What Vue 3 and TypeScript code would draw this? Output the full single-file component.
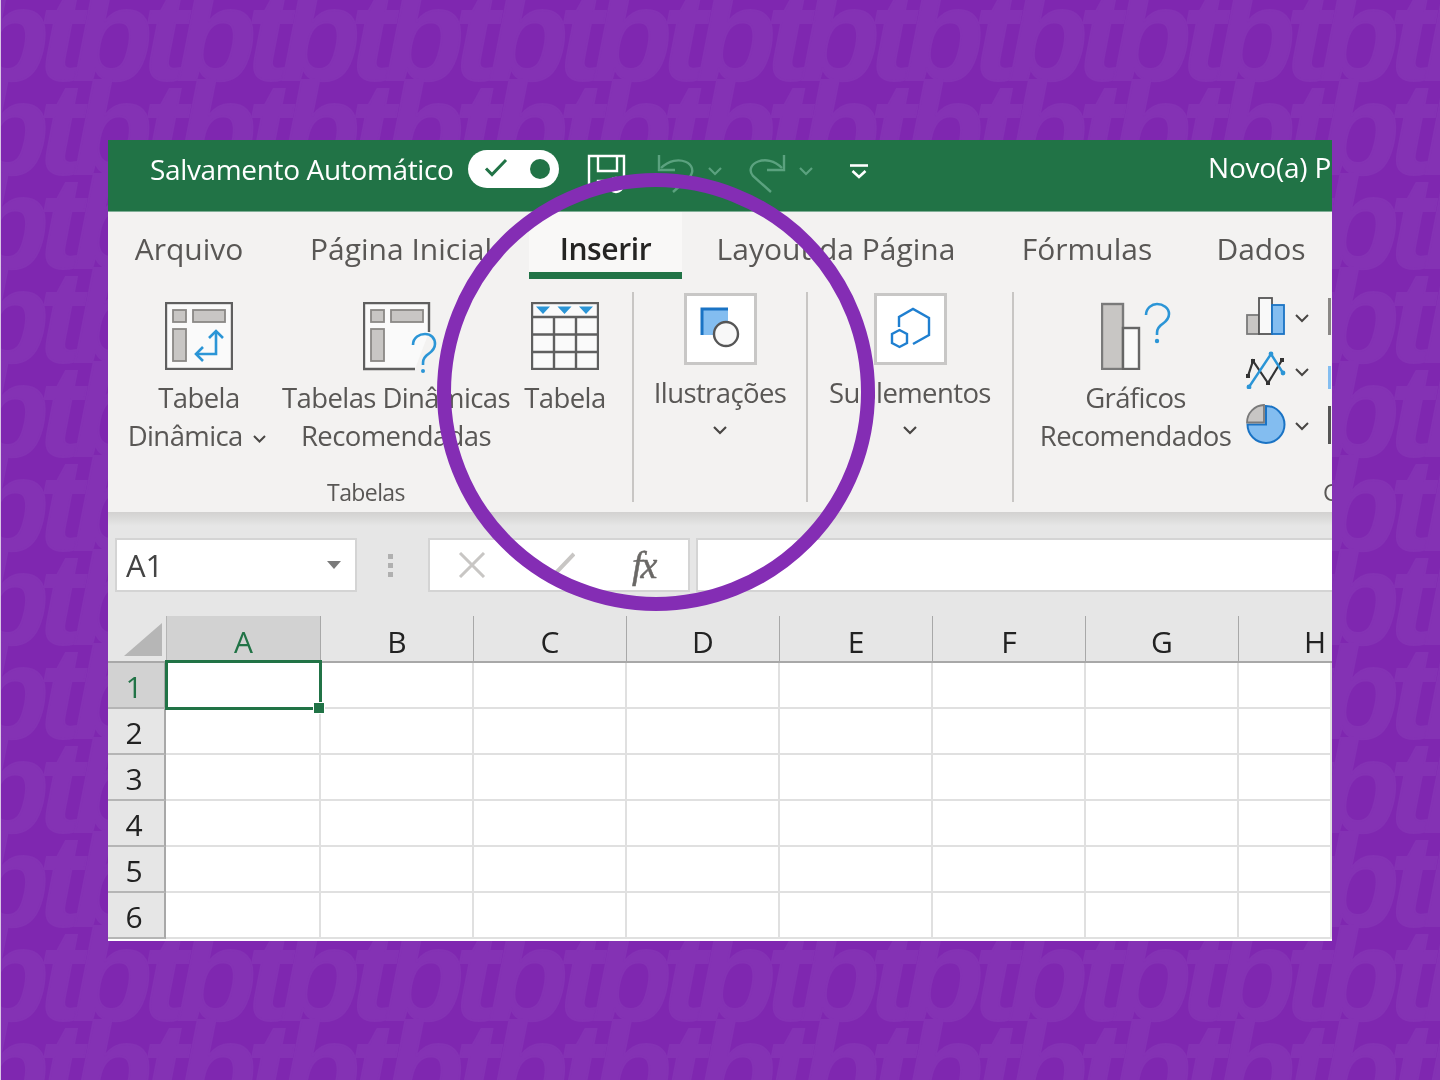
<script setup lang="ts">
const tabs = [
  { label: 'Arquivo', width: 162 },
  { label: 'Página Inicial', width: 256 },
  { label: 'Inserir', width: 153, active: true },
  { label: 'Layout da Página', width: 308 },
  { label: 'Fórmulas', width: 194 },
  { label: 'Dados', width: 154 },
]

const columns = ['A', 'B', 'C', 'D', 'E', 'F', 'G', 'H']
const rows = [1, 2, 3, 4, 5, 6]

const watermarkRows = Array.from({ length: 12 }, (_, i) => i)
const watermarkText = 'tb'.repeat(16)
</script>

<template>
  <div class="page">
    <div class="watermark" aria-hidden="true">
      <div v-for="r in watermarkRows" :key="r" class="watermark-row">{{ watermarkText }}</div>
    </div>

    <main class="window">
      <header class="titlebar">
        <span class="autosave">Salvamento Automático</span>
        <span class="toggle">
          <svg class="toggle-check" width="24" height="20" viewBox="0 0 24 20">
            <path d="M2 10.5 L8 16.5 L22 2" fill="none" stroke="#217346" stroke-width="3" />
          </svg>
          <span class="toggle-knob"></span>
        </span>
        <svg class="qat-save" width="40" height="40" viewBox="0 0 40 40" fill="none" stroke="#fff" stroke-width="2.4">
          <path d="M2 38 V2 H37 V24" />
          <path d="M11 2 V17 H30 V2" />
          <path d="M11 38 V27 H20" />
          <circle cx="29" cy="31" r="7" />
        </svg>
        <svg class="qat-undo" width="38" height="40" viewBox="0 0 38 40" fill="none" stroke="#5ba27f" stroke-width="2.4">
          <path d="M2 1 V16 H18" />
          <path d="M4 14 C20 -2 44 10 32 24 L16 38" />
        </svg>
        <svg class="qat-chev" width="14" height="9" viewBox="0 0 14 9" fill="none" stroke="#5ba27f" stroke-width="2.2">
          <path d="M1 1 L7 7 L13 1" />
        </svg>
        <svg class="qat-redo" width="38" height="40" viewBox="0 0 38 40" fill="none" stroke="#5ba27f" stroke-width="2.4">
          <path d="M35 1 V16 H18" />
          <path d="M33 14 C18 -2 -6 10 4 22 L22 38" />
        </svg>
        <svg class="qat-chev qat-chev-last" width="14" height="9" viewBox="0 0 14 9" fill="none" stroke="#5ba27f" stroke-width="2.2">
          <path d="M1 1 L7 7 L13 1" />
        </svg>
        <svg class="qat-more" width="18" height="15" viewBox="0 0 18 15" fill="none" stroke="#fff" stroke-width="2.6">
          <path d="M0 1.5 H18" />
          <path d="M2.5 7 L9 13 L15.5 7" />
        </svg>
        <span class="doc-title">Novo(a) Pasta de trabalho</span>
      </header>

      <nav class="tabs">
        <div
          v-for="tab in tabs"
          :key="tab.label"
          class="tab"
          :class="{ active: tab.active }"
          :style="{ width: tab.width + 'px' }"
        >
          {{ tab.label }}
        </div>
      </nav>

      <section class="ribbon">
        <div class="group group-tables">
          <div class="group-items">
            <div class="cmd cmd-pivot">
              <svg class="cmd-icon" width="68" height="68" viewBox="0 0 68 68">
                <rect x="1" y="1" width="66" height="66" fill="#fafafa" stroke="#5f5f5f" stroke-width="2.4" />
                <g fill="#c8c6c4" stroke="#8a8886" stroke-width="1.8">
                  <rect x="8" y="8" width="13" height="12" />
                  <rect x="28" y="8" width="32" height="12" />
                  <rect x="8" y="27" width="13" height="32" />
                </g>
                <g fill="none" stroke="#2b95d6" stroke-width="2.6">
                  <path d="M31 52 H51 V29" />
                  <path d="M44 36 L51 29 L58 36" />
                  <path d="M38 45 L31 52 L38 59" />
                </g>
              </svg>
              <span class="cmd-label">Tabela</span>
              <span class="cmd-label">
                Dinâmica
                <svg class="chev-inline" width="13" height="8" viewBox="0 0 13 8" fill="none" stroke="#484644" stroke-width="2">
                  <path d="M1 1 L6.5 6.5 L12 1" />
                </svg>
              </span>
            </div>
            <div class="cmd cmd-recommended">
              <svg class="cmd-icon" width="76" height="74" viewBox="0 0 76 74">
                <path d="M52 67 H1 V1 H66 V30" fill="#fafafa" stroke="#5f5f5f" stroke-width="2.4" />
                <g fill="#c8c6c4" stroke="#8a8886" stroke-width="1.8">
                  <rect x="8" y="8" width="13" height="12" />
                  <rect x="28" y="8" width="32" height="12" />
                  <rect x="8" y="27" width="13" height="32" />
                </g>
                <path d="M50 43 C50 35 57 32 62 32 C68 32 72 36 72 42 C72 49 66 51 63 54 C60 57 60 59 60 63" fill="none" stroke="#2b95d6" stroke-width="2.6" />
                <circle cx="60" cy="69" r="2" fill="#2b95d6" />
              </svg>
              <span class="cmd-label">Tabelas Dinâmicas</span>
              <span class="cmd-label">Recomendadas</span>
            </div>
            <div class="cmd cmd-table">
              <svg class="cmd-icon" width="68" height="68" viewBox="0 0 68 68">
                <rect x="1" y="1" width="66" height="66" fill="#fafafa" stroke="#5f5f5f" stroke-width="2.4" />
                <path d="M1 15 H67 M1 32.5 H67 M1 50 H67 M23 15 V67 M45 15 V67" stroke="#5f5f5f" stroke-width="2.4" fill="none" />
                <path d="M5 4.5 H19 L12 12 Z M26.500 4.500 H40.500 L33.500 12 Z M48 4.500 H62 L55 12 Z" fill="#2b95d6" />
              </svg>
              <span class="cmd-label">Tabela</span>
            </div>
          </div>
          <div class="group-name group-name-tables">Tabelas</div>
        </div>

        <div class="group group-illustrations">
          <div class="boxed-cmd">
            <div class="icon-box">
              <svg width="66" height="66" viewBox="0 0 66 66">
                <rect x="15" y="13" width="26" height="26" fill="#83bdf0" />
                <path d="M15 39 V13 H41" fill="none" stroke="#1a73c4" stroke-width="3" />
                <circle cx="39" cy="38" r="12" fill="#f8f8f8" stroke="#555" stroke-width="2.400" />
              </svg>
            </div>
            <span class="cmd-label">Ilustrações</span>
            <svg class="chev-below" width="14" height="9" viewBox="0 0 14 9" fill="none" stroke="#484644" stroke-width="2.2">
              <path d="M1 1 L7 7 L13 1" />
            </svg>
          </div>
        </div>

        <div class="group group-addins">
          <div class="boxed-cmd">
            <div class="icon-box">
              <svg width="66" height="66" viewBox="0 0 66 66" fill="none" stroke="#1f7fd0" stroke-width="2.400">
                <path d="M36 48 L52 39 V22 L36 13 L22 21 V31" />
                <path d="M22.500 34 L30 38 V47 L22.500 51 L15 47 V38 Z" />
              </svg>
            </div>
            <span class="cmd-label">Suplementos</span>
            <svg class="chev-below" width="14" height="9" viewBox="0 0 14 9" fill="none" stroke="#484644" stroke-width="2.2">
              <path d="M1 1 L7 7 L13 1" />
            </svg>
          </div>
        </div>

        <div class="group group-charts">
          <div class="group-items charts-row">
            <div class="cmd cmd-charts">
              <svg class="cmd-icon" width="70" height="68" viewBox="0 0 70 68">
                <rect x="1" y="2" width="21" height="65" fill="#c8c6c4" stroke="#7a7a7a" stroke-width="2.400" />
                <rect x="22" y="26" width="16" height="41" fill="#f9f9f9" stroke="#666" stroke-width="2.400" />
                <path d="M45 13 C45 6 51 2 56 2 C62 2 68 6 68 12 C68 19 62 21 59 24 C56 27 56 29 56 33" fill="none" stroke="#2b95d6" stroke-width="2.600" />
                <circle cx="56" cy="39" r="2.200" fill="#2b95d6" />
              </svg>
              <span class="cmd-label">Gráficos</span>
              <span class="cmd-label">Recomendados</span>
            </div>
            <div class="small-cmds">
              <div class="small-cmd">
                <svg width="40" height="38" viewBox="0 0 40 38">
                  <rect x="1" y="18" width="12" height="19" fill="#c8c6c4" stroke="#7a7a7a" stroke-width="1.800" />
                  <rect x="13" y="1" width="13" height="36" fill="#f9f9f9" stroke="#555" stroke-width="1.800" />
                  <rect x="26" y="8" width="12" height="29" fill="#83bdf0" stroke="#1a73c4" stroke-width="1.800" />
                </svg>
                <svg class="small-chev" width="14" height="9" viewBox="0 0 14 9" fill="none" stroke="#484644" stroke-width="2">
                  <path d="M1 1 L7 7 L13 1" />
                </svg>
              </div>
              <div class="small-cmd">
                <svg width="40" height="38" viewBox="0 0 40 38" fill="none">
                  <path d="M2 25 L7 10 L22 32 L36 9" stroke="#333" stroke-width="2.200" />
                  <path d="M3 36 L25 3 L37 22" stroke="#2b95d6" stroke-width="2.400" />
                  <circle cx="3" cy="36" r="2.400" fill="#2b95d6" />
                  <circle cx="25" cy="3" r="2.400" fill="#2b95d6" />
                  <circle cx="37" cy="22" r="2.400" fill="#2b95d6" />
                  <rect x="0" y="23" width="4" height="4" fill="#333" />
                  <rect x="5" y="8" width="4" height="4" fill="#333" />
                  <rect x="20" y="30" width="4" height="4" fill="#333" />
                  <rect x="34" y="7" width="4" height="4" fill="#333" />
                </svg>
                <svg class="small-chev" width="14" height="9" viewBox="0 0 14 9" fill="none" stroke="#484644" stroke-width="2">
                  <path d="M1 1 L7 7 L13 1" />
                </svg>
              </div>
              <div class="small-cmd">
                <svg width="40" height="40" viewBox="0 0 40 40">
                  <path d="M20 2 A18.500 18.500 0 1 1 1.500 20.500 H20 Z" fill="#83bdf0" stroke="#1a73c4" stroke-width="2" />
                  <path d="M18 1 V18.500 H1 A17.500 17.500 0 0 1 18 1 Z" fill="#c8c6c4" stroke="#7a7a7a" stroke-width="1.800" />
                </svg>
                <svg class="small-chev" width="14" height="9" viewBox="0 0 14 9" fill="none" stroke="#484644" stroke-width="2">
                  <path d="M1 1 L7 7 L13 1" />
                </svg>
              </div>
            </div>
            <div class="next-col">
              <span class="next-bar"></span>
              <span class="next-bar blue"></span>
              <span class="next-bar dark"></span>
            </div>
          </div>
          <div class="group-name charts-name">Gráficos</div>
        </div>
      </section>

      <section class="formula-bar">
        <div class="name-box">
          <span>A1</span>
          <span class="name-arrow"></span>
        </div>
        <div class="grip"><i></i><i></i><i></i></div>
        <div class="fx-box">
          <svg width="28" height="26" viewBox="0 0 28 26" fill="none" stroke="#c8c6c4" stroke-width="3">
            <path d="M2 1 L26 25 M26 1 L2 25" />
          </svg>
          <svg width="34" height="26" viewBox="0 0 34 26" fill="none" stroke="#c8c6c4" stroke-width="4">
            <path d="M2 14 L12 24 L33 2" />
          </svg>
          <span class="fx">fx</span>
        </div>
        <div class="formula-input"></div>
      </section>

      <section class="sheet">
        <div class="corner"><span class="corner-tri"></span></div>
        <div
          v-for="col in columns"
          :key="col"
          class="col-head"
          :class="{ selected: col === 'A' }"
        >
          {{ col }}
        </div>
        <template v-for="row in rows" :key="row">
          <div class="row-head" :class="{ selected: row === 1 }">{{ row }}</div>
          <div
            v-for="col in columns"
            :key="col + row"
            class="cell"
            :class="{ 'cell-active': row === 1 && col === 'A' }"
          >
            <template v-if="row === 1 && col === 'A'">
              <span class="selection"></span>
              <span class="handle"></span>
            </template>
          </div>
        </template>
      </section>
    </main>

    <svg class="highlight" width="438" height="438" viewBox="0 0 438 438">
      <circle cx="219" cy="219" r="212" fill="none" stroke="#842db4" stroke-width="14" />
    </svg>
  </div>
</template>

<style>
html,
body {
  margin: 0;
  background: #7f27b0;
}
</style>

<style scoped>
.page {
  position: relative;
  width: 1440px;
  height: 1080px;
  box-sizing: border-box;
  padding: 140px 108px 139px;
  background: #7f27b0;
  border-left: 1px solid #d9c6e6;
  overflow: hidden;
  font-family: "Open Sans", "Noto Sans", sans-serif;
}

.watermark {
  position: absolute;
  left: -66px;
  top: -12px;
  font-family: "Liberation Sans", sans-serif;
  font-weight: 700;
  font-style: italic;
  font-size: 130px;
  letter-spacing: -9.4px;
  line-height: 94px;
  color: #8432b4;
  -webkit-text-stroke: 2px #8432b4;
  white-space: nowrap;
}

.watermark-row {
  height: 94px;
}

.window {
  position: relative;
  width: 1224px;
  height: 801px;
  margin-left: -1px;
  overflow: hidden;
  background: #fff;
  filter: blur(0.45px);
}

/* title bar */
.titlebar {
  box-sizing: border-box;
  display: flex;
  align-items: center;
  height: 72px;
  padding: 0 0 10px 42px;
  background: #217346;
  border-bottom: 1px solid #7fae96;
  color: #fff;
  white-space: nowrap;
}

.autosave {
  width: 318px;
  font-size: 28px;
  letter-spacing: -0.35px;
  flex: none;
  margin-bottom: 3px;
}

.toggle {
  position: relative;
  display: block;
  flex: none;
  width: 91px;
  height: 38px;
  border-radius: 19px;
  background: #fff;
  margin-bottom: 3px;
}

.toggle-check {
  position: absolute;
  left: 16px;
  top: 8px;
}

.toggle-knob {
  position: absolute;
  left: 62px;
  top: 9px;
  width: 20px;
  height: 20px;
  border-radius: 50%;
  background: #217346;
}

.titlebar svg {
  flex: none;
}

.qat-save {
  margin-left: 28px;
  margin-top: 7px;
}

.qat-undo {
  margin-left: 30px;
  margin-top: 7px;
}

.titlebar .qat-chev {
  margin-left: 13px;
  margin-top: 1px;
}

.qat-redo {
  margin-left: 27px;
  margin-top: 7px;
}

.titlebar .qat-chev-last {
  margin-left: 12px;
}

.qat-more {
  margin-left: 37px;
  margin-top: 2px;
}

.doc-title {
  margin-left: 340px;
  font-size: 28px;
  letter-spacing: -0.2px;
  margin-bottom: 7px;
}

/* tabs */
.tabs {
  display: flex;
  height: 67px;
  background: #f3f2f1;
  white-space: nowrap;
}

.tab {
  box-sizing: border-box;
  flex: none;
  height: 67px;
  line-height: 73px;
  text-align: center;
  font-size: 30px;
  color: #595755;
}

.tab:first-child {
  margin-right: 3px;
}

.tab.active {
  height: 67px;
  background: #f9f8f7;
  border-bottom: 7px solid #217346;
  color: #252423;
  font-weight: 600;
  letter-spacing: -0.4px;
}

/* ribbon */
.ribbon {
  display: flex;
  height: 233px;
  background: #f3f2f1;
  color: #595755;
}

.group {
  position: relative;
  flex: none;
  box-sizing: border-box;
  display: flex;
  flex-direction: column;
}

.group::after {
  content: "";
  position: absolute;
  right: 0;
  top: 13px;
  height: 210px;
  width: 2px;
  background: #c8c6c4;
}

.group-tables {
  width: 526px;
}

.group-illustrations {
  width: 174px;
  padding-right: 2px;
}

.group-addins {
  width: 206px;
  padding-right: 2px;
}

.group-charts {
  width: 318px;
}

.group-charts::after {
  display: none;
}

.group-items {
  display: flex;
  padding-top: 23px;
  padding-left: 12px;
}

.group-name {
  position: absolute;
  left: 0;
  right: 0;
  top: 200px;
  text-align: center;
  font-size: 23px;
  line-height: 26px;
  letter-spacing: -0.6px;
  color: #595755;
}

.group-name-tables {
  padding-right: 10px;
}

.cmd {
  flex: none;
  display: flex;
  flex-direction: column;
  align-items: center;
  white-space: nowrap;
}

.cmd-pivot {
  width: 158px;
}

.cmd-recommended {
  width: 236px;
}

.cmd-table {
  width: 102px;
}

.cmd-icon {
  display: block;
  margin-bottom: 9px;
}

.cmd-recommended .cmd-icon {
  margin-left: 10px;
  margin-bottom: 3px;
}

.cmd-label {
  display: block;
  font-size: 27.5px;
  line-height: 38px;
  letter-spacing: -0.6px;
  white-space: nowrap;
}

.chev-inline {
  margin-left: 4px;
  margin-right: 4px;
  vertical-align: 3px;
}

.boxed-cmd {
  display: flex;
  flex-direction: column;
  align-items: center;
  padding-top: 14px;
}

.icon-box {
  box-sizing: border-box;
  width: 73px;
  height: 72px;
  border: 3px solid #c8c7c6;
  background: #fff;
  margin-bottom: 9px;
}

.icon-box svg {
  display: block;
}

.chev-below {
  margin-top: 14px;
}

.charts-row {
  padding-left: 0;
  padding-top: 18px;
}

.cmd-charts {
  width: 233px;
  padding-top: 5px;
  padding-left: 10px;
  box-sizing: border-box;
}

.small-cmds {
  display: flex;
  flex-direction: column;
  gap: 16px;
  flex: none;
  margin-left: -1px;
  width: 82px;
}

.small-cmd {
  display: flex;
  align-items: center;
  gap: 9px;
  height: 38px;
}

.small-chev {
  margin-top: 4px;
}

.next-col {
  display: flex;
  flex-direction: column;
  flex: none;
  padding-top: 1px;
}

.next-bar {
  display: block;
  width: 3px;
  height: 37px;
  background: #8a8886;
}

.next-bar.blue {
  height: 23px;
  margin-top: 31px;
  background: #83bdf0;
}

.next-bar.dark {
  height: 38px;
  margin-top: 17px;
  background: #555;
}

.charts-name {
  left: auto;
  right: -11px;
  width: 20px;
  text-align: left;
}

/* formula bar */
.formula-bar {
  display: flex;
  align-items: center;
  height: 104px;
  box-sizing: border-box;
  padding: 26px 0 24px 7px;
  background: linear-gradient(#d2d1d0 0, #e6e6e6 14px);
}

.name-box {
  box-sizing: border-box;
  flex: none;
  display: flex;
  align-items: center;
  justify-content: space-between;
  width: 242px;
  height: 54px;
  padding: 0 14px 0 9px;
  background: #fff;
  border: 2px solid #d4d4d4;
  font-size: 31px;
  color: #444;
}

.name-arrow {
  width: 0;
  height: 0;
  border-left: 7px solid transparent;
  border-right: 7px solid transparent;
  border-top: 8px solid #7a7a7a;
}

.grip {
  flex: none;
  display: flex;
  flex-direction: column;
  gap: 4px;
  margin-left: 31px;
  width: 40px;
}

.grip i {
  display: block;
  width: 5px;
  height: 5px;
  background: #b0b0b0;
}

.fx-box {
  box-sizing: border-box;
  flex: none;
  display: flex;
  align-items: center;
  width: 262px;
  height: 54px;
  padding-left: 28px;
  background: #fff;
  border: 2px solid #d4d4d4;
  gap: 55px;
}

.fx {
  font-family: "Liberation Serif", serif;
  font-style: italic;
  font-size: 38px;
  color: #6a6866;
  margin-left: 2px;
  letter-spacing: -2px;
  -webkit-text-stroke: 0.5px #6a6866;
}

.formula-input {
  flex: 1;
  height: 54px;
  box-sizing: border-box;
  margin-left: 6px;
  background: #fff;
  border: 2px solid #d4d4d4;
  border-right: none;
}

/* sheet */
.sheet {
  display: grid;
  grid-template-columns: 58px 155px repeat(6, 153px) 93px;
  grid-template-rows: 47px repeat(6, 46px);
  background: #fff;
}

.corner {
  position: relative;
  background: #e6e6e6;
  border-bottom: 2px solid #a8a8a8;
  box-sizing: border-box;
}

.corner-tri {
  position: absolute;
  left: 16px;
  top: 7px;
  width: 0;
  height: 0;
  border-left: 38px solid transparent;
  border-bottom: 33px solid #b6b6b6;
}

.col-head {
  box-sizing: border-box;
  background: #e6e6e6;
  border-bottom: 2px solid #a8a8a8;
  border-right: 1px solid #a8a8a8;
  text-align: center;
  font-size: 30px;
  line-height: 52px;
  color: #222;
  overflow: hidden;
}

.col-head:nth-child(2) {
  border-left: 1px solid #b5b5b5;
}

.col-head:nth-child(9) {
  border-right: none;
  text-align: left;
  padding-left: 65px;
}

.col-head.selected,
.row-head.selected {
  background: #d2d2d2;
  color: #217346;
}

.row-head {
  box-sizing: border-box;
  background: #e6e6e6;
  border-bottom: 2px solid #b5b5b5;
  border-right: 2px solid #a8a8a8;
  font-size: 30px;
  line-height: 48px;
  color: #222;
  padding-right: 4px;
  text-align: center;
}

.cell {
  position: relative;
  box-sizing: border-box;
  background: #fff;
  border-right: 2px solid #e0e0e0;
  border-bottom: 2px solid #e0e0e0;
}

.cell-active {
  z-index: 2;
}

.selection {
  position: absolute;
  left: -1px;
  top: -3px;
  width: 157px;
  height: 50px;
  box-sizing: border-box;
  border: 3px solid #217346;
}

.handle {
  position: absolute;
  left: 147px;
  top: 39px;
  width: 12px;
  height: 12px;
  box-sizing: border-box;
  background: #217346;
  border: 1px solid #fff;
}

.highlight {
  position: absolute;
  left: 436px;
  top: 173px;
}
</style>
